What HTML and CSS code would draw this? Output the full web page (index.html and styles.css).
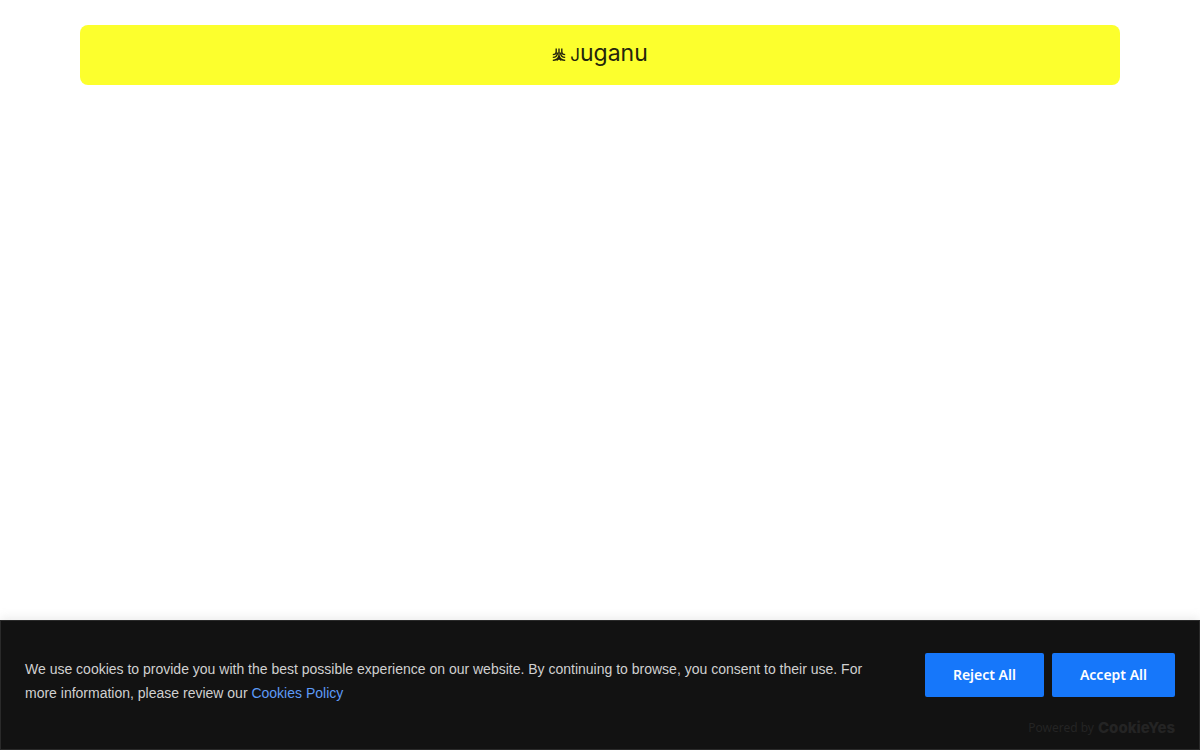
FILE: index.html
```html
<!DOCTYPE html>
<html lang="en">
<head>
<meta charset="utf-8">
<meta name="viewport" content="width=device-width, initial-scale=1">
<title>Juganu</title>
<link rel="stylesheet" href="styles.css">
</head>
<body>
<header class="site-header">
  <a class="brand" href="#" aria-label="Juganu">
    <svg class="brand-mark" viewBox="0 0 14 14" aria-hidden="true">
      <path d="M4.2 .5V4Q4.2 6.6 .8 6.6M7 .5V8M9.8 .5V4Q9.8 6.6 13.2 6.6M5.6 4.5Q5.2 9.4 .8 9.4M8.4 4.5Q8.8 9.4 13.2 9.4M7 7.5Q5.8 12.4 .8 12.4M7 7.5Q8.2 12.4 13.2 12.4M4.6 12.6L7 10.4L9.4 12.6"/>
    </svg>
    <span class="brand-name"><span class="brand-initial">J</span>uganu</span>
  </a>
</header>
<main class="page"></main>
<section class="consent" aria-label="Cookie consent">
  <div class="consent-body">
    <p class="consent-text">We use cookies to provide you with the best possible experience on our website. By continuing to browse, you consent to their use. For more information, please review our <a class="policy" href="#">Cookies Policy</a></p>
    <div class="actions">
      <button class="btn btn-reject" type="button">Reject All</button>
      <button class="btn btn-accept" type="button">Accept All</button>
    </div>
  </div>
  <div class="powered">Powered by <span class="powered-name">CookieYes</span></div>
</section>
</body>
</html>
```
FILE: styles.css
```css
* { box-sizing: border-box; }
body {
  margin: 0;
  min-height: 100vh;
  display: flex;
  flex-direction: column;
  background: #fff;
  font-family: "Liberation Sans", Arial, sans-serif;
}
.site-header {
  margin: 25px 80px 0;
  padding: 10px 12px 12px;
  display: flex;
  justify-content: center;
  background: #fcff2d;
  border-radius: 8px;
}
.brand {
  display: flex;
  align-items: center;
  gap: 4px;
  color: #25250c;
  text-decoration: none;
}
.brand-mark {
  width: 14px;
  height: 14px;
  margin-top: 2px;
  fill: none;
  stroke: currentColor;
  stroke-width: 1.4;
}
.brand-name {
  font: 400 23px/36px Inter, sans-serif;
}
.brand-initial { font-size: 17px; }
.page { flex: 1; }
.consent {
  background: #121212;
  border: 1px solid #2a2a2a;
  box-shadow: 0 -1px 10px rgba(172, 171, 171, 0.3);
}
.consent-body {
  padding: 32px 24px 12px;
  display: flex;
  align-items: flex-start;
  gap: 48px;
}
.consent-text {
  flex: 1;
  margin: 0;
  padding-top: 4px;
  color: #d0d0d0;
  font-size: 14px;
  line-height: 24px;
}
.policy {
  color: #5e9bf7;
  text-decoration: none;
}
.actions {
  display: flex;
  gap: 8px;
}
.btn {
  height: 44px;
  padding: 0 26px;
  border: 2px solid #1677fa;
  border-radius: 2px;
  background: #1677fa;
  color: #fff;
  font: 600 14px/24px "Noto Sans", sans-serif;
  white-space: nowrap;
}
.powered {
  padding: 3px 24px 13px;
  display: flex;
  justify-content: flex-end;
  align-items: center;
  gap: 4px;
  color: #242424;
  font-family: "Noto Sans", sans-serif;
  font-size: 12px;
  line-height: 16px;
}
.powered-name {
  font-family: Inter, sans-serif;
  font-size: 15px;
  font-weight: 800;
}
```
